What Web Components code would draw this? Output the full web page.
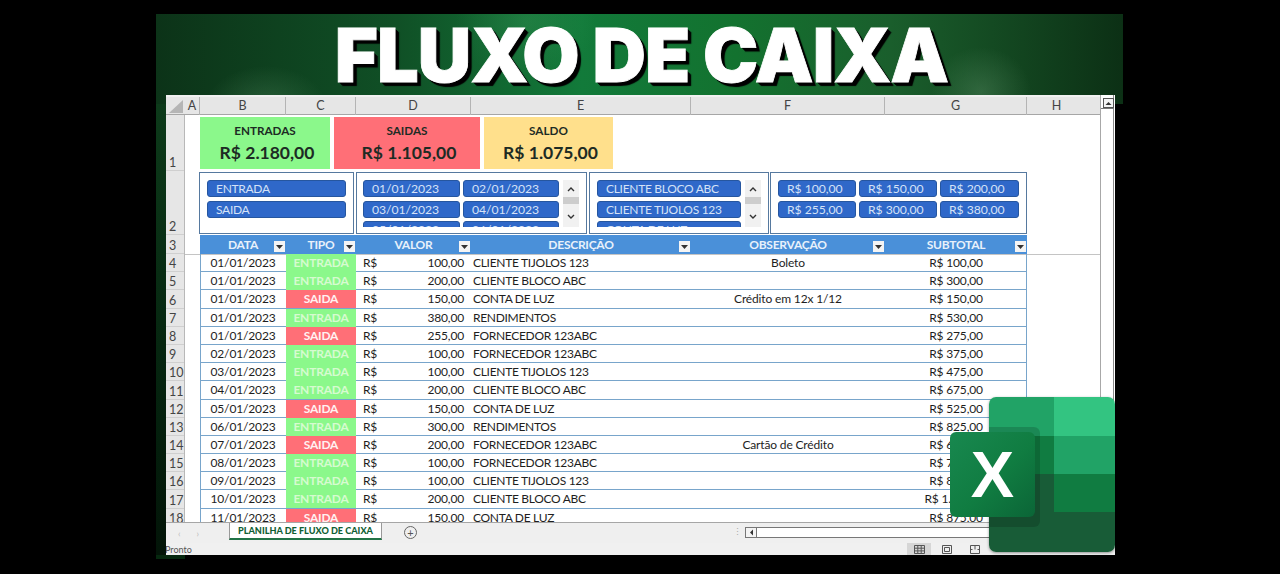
<!DOCTYPE html>
<html lang="pt-BR">
<head>
<meta charset="utf-8">
<title>Fluxo de Caixa</title>
<style>
  html, body { margin: 0; background: #000; height: 574px; overflow: hidden; }
  body { font-family: "Lato", "Liberation Sans", sans-serif; }
</style>
</head>
<body>
<fx-poster>
  <fx-sheet>
    <fx-row num="1" h="56" pad="2">
      <fx-cards>
        <fx-card w="130" color="#8bf88b" label="ENTRADAS" value="R$ 2.180,00"></fx-card>
        <fx-card w="146" color="#ff6f77" label="SAIDAS" value="R$ 1.105,00"></fx-card>
        <fx-card w="129" color="#ffe08c" label="SALDO" value="R$ 1.075,00"></fx-card>
      </fx-cards>
    </fx-row>
    <fx-row num="2" h="64" pad="1">
      <fx-slicers>
        <fx-slicer w="155" cols="1fr" pad="7">
          <fx-btn tight>ENTRADA</fx-btn><fx-btn tight>SAIDA</fx-btn>
        </fx-slicer>
        <fx-slicer w="231" cols="97px 96px" pad="6" scroll>
          <fx-btn>01/01/2023</fx-btn><fx-btn>02/01/2023</fx-btn>
          <fx-btn>03/01/2023</fx-btn><fx-btn>04/01/2023</fx-btn>
          <fx-btn>05/01/2023</fx-btn><fx-btn>06/01/2023</fx-btn>
        </fx-slicer>
        <fx-slicer w="180" cols="144px" pad="7" scroll>
          <fx-btn tight>CLIENTE BLOCO ABC</fx-btn><fx-btn tight>CLIENTE TIJOLOS 123</fx-btn><fx-btn tight>CONTA DE LUZ</fx-btn>
        </fx-slicer>
        <fx-slicer w="257" cols="78px 78px 79px" pad="7" style="margin-left:-1px">
          <fx-btn>R$ 100,00</fx-btn><fx-btn>R$ 150,00</fx-btn><fx-btn>R$ 200,00</fx-btn>
          <fx-btn>R$ 255,00</fx-btn><fx-btn>R$ 300,00</fx-btn><fx-btn>R$ 380,00</fx-btn>
        </fx-slicer>
      </fx-slicers>
    </fx-row>
    <fx-row num="3" h="19" freeze><fx-thead></fx-thead></fx-row>
    <fx-tbody></fx-tbody>
  </fx-sheet>
  <fx-excel-logo></fx-excel-logo>
</fx-poster>

<script>
const COLS = "86px 70px 115px 220px 194px 142px";

class FxPoster extends HTMLElement {
  constructor() {
    super();
    this.attachShadow({ mode: "open" }).innerHTML = `
      <style>
        :host {
          display: block; position: relative;
          width: 967px; height: 545px; margin: 14px 0 0 156px;
          background:
            radial-gradient(ellipse 60px 40px at 110px 92px, rgba(130,190,140,.22), transparent) 0 0 / 967px 90px no-repeat,
            radial-gradient(ellipse 50px 45px at 825px 78px, rgba(120,170,130,.28), transparent) 0 0 / 967px 90px no-repeat,
            radial-gradient(ellipse 70px 60px at 370px 8px, rgba(90,190,120,.2), transparent) 0 0 / 967px 90px no-repeat,
            linear-gradient(90deg, #0c3318 0, #105026 25%, #127a3a 44%, #13722f 60%, #1a5e2c 76%, #0c3015 100%) 0 0 / 967px 90px no-repeat,
            linear-gradient(#0d3a1a, #04200d 70%, #031408) 0 90px / 10px 451px no-repeat,
            linear-gradient(#06280f, #06280f) 0 541px / 29px 4px no-repeat;
        }
        .banner { height: 81px; display: flex; align-items: center; justify-content: center; padding-left: 4px; }
        h1 {
          margin: 0; color: #fff; white-space: nowrap;
          font: 900 74px/1 "Inter", "Liberation Sans", sans-serif;
          letter-spacing: -1px;
          -webkit-text-stroke: .8px #fff;
          text-shadow: 1px 1px 0 #000, 2px 2px 0 #000, 3px 3px 0 #000, 4px 4px 1px #000;
        }
      </style>
      <div class="banner"><h1>FLUXO DE CAIXA</h1></div>
      <slot></slot>`;
  }
}

class FxSheet extends HTMLElement {
  constructor() {
    super();
    const letters = [["A",15],["B",86],["C",70],["D",115],["E",220],["F",194],["G",142],["H",59]];
    const heads = letters.map(([l, w]) => `<span style="width:${w}px">${l}</span>`).join("");
    this.attachShadow({ mode: "open" }).innerHTML = `
      <style>
        :host { display: block; margin-left: 10px; width: 949px; height: 460px; background: #e9e9e9; font: 13px "Lato", "Liberation Sans", sans-serif; color: #222; overflow: hidden; }
        .top { display: flex; height: 427px; }
        .main { width: 934px; border-right: 1px solid #a8a8a8; box-sizing: content-box; background: #fff; overflow: hidden; }
        .cols { display: flex; height: 18px; padding-top: 2px; background: #e6e6e6; box-shadow: inset 0 -1px 0 #a6a6a6, inset 0 2px 0 #f1f1f1; }
        .cols span { box-sizing: border-box; text-align: center; font-size: 12.5px; line-height: 17px; color: #444; border-right: 1px solid #b4b4b4; }
        .cols span:last-child { border-right: 0; }
        .corner { width: 19px; display: flex; align-items: flex-end; justify-content: flex-end; padding: 0 2px 2px 0; box-sizing: border-box; }
        .vs { width: 14px; background: linear-gradient(90deg, #fff 12px, #8a8a8a 12px, #8a8a8a 13px, #fff 13px); }
        .vs i { display: flex; justify-content: center; align-items: center; width: 11px; height: 10px; margin: 3px 0 0 2px; background: #f4f4f4; border: 1px solid #555; box-sizing: border-box; }
        .vs b { display: block; height: 1px; background: #777; width: 13px; }
        .tabs { height: 21px; display: flex; align-items: flex-start; background: #efefef; border-top: 1px solid #a6a6a6; box-sizing: border-box; }
        .nav { width: 63px; display: flex; gap: 16px; padding: 5px 0 0 12px; box-sizing: border-box; color: #bbb; font-size: 9px; }
        .tab { width: 153px; height: 17px; box-sizing: border-box; background: #fff; border: 1px solid #999; border-top: 0; border-bottom: 2px solid #217346; color: #0f6034; font-weight: 900; font-size: 9.1px; line-height: 15px; text-align: center; }
        .plus { width: 11px; height: 11px; border: 1px solid #666; border-radius: 50%; margin: 3px 0 0 22px; display: flex; align-items: center; justify-content: center; color: #555; font-size: 11px; line-height: 10px; }
        .dots { margin: 4px 0 0 316px; color: #aaa; font-size: 9px; line-height: 10px; width: 6px; }
        .hs { margin: 4px 0 0 6px; width: 360px; height: 11px; border: 1px solid #777; box-sizing: border-box; background: #fff; display: flex; }
        .hs i { width: 10px; border-right: 1px solid #777; background: #f4f4f4; display: flex; align-items: center; justify-content: center; }
        .status { height: 12px; background: #f0f0f0; display: flex; align-items: center; font-size: 9px; color: #555; }
        .status .txt { width: 742px; margin-left: -1px; }
        .views { display: flex; align-items: center; height: 12px; }
        .views span { width: 28px; height: 12px; display: flex; align-items: center; justify-content: center; }
        .views span.on { background: #d6d6d6; width: 24px; }
      </style>
      <div class="top">
        <div class="main">
          <div class="cols">
            <div class="corner"><svg width="14" height="13"><path d="M14 0V13H0Z" fill="#b5b5b5"/></svg></div>
            ${heads}
          </div>
          <slot></slot>
        </div>
        <div class="vs">
          <i><svg width="7" height="5"><path d="M3.5 1L6.5 4H.5Z" fill="#333"/></svg></i><b></b>
        </div>
      </div>
      <div class="tabs">
        <div class="nav"><span>‹</span><span>›</span></div>
        <div class="tab">PLANILHA DE FLUXO DE CAIXA</div>
        <div class="plus">+</div>
        <div class="dots">⋮</div>
        <div class="hs"><i><svg width="5" height="7"><path d="M4 .5V6.5L1 3.5Z" fill="#333"/></svg></i></div>
      </div>
      <div class="status">
        <div class="txt">Pronto</div>
        <div class="views">
          <span class="on"><svg width="11" height="9" fill="none" stroke="#555"><path d="M.5.5h10v8H.5zM.5 3.2h10M.5 5.9h10M3.8.5v8M7.2.5v8"/></svg></span>
          <span style="margin-left:2px"><svg width="10" height="9" fill="none" stroke="#555"><path d="M.5.5h9v8h-9zM2.5 2.5h5v4h-5z"/></svg></span>
          <span><svg width="10" height="9" fill="none" stroke="#555"><path d="M.5.5h9v8h-9zM5 .5v4M.5 4.5h2M7.5 4.5h2"/></svg></span>
        </div>
      </div>`;
  }
}

class FxRow extends HTMLElement {
  constructor() {
    super();
    this.attachShadow({ mode: "open" });
  }
  connectedCallback() {
    const h = this.getAttribute("h") || "18.2";
    const pad = this.getAttribute("pad") || "0";
    const line = this.hasAttribute("freeze") ? "box-shadow: 0 1px 0 #c4c4c4;" : "";
    this.shadowRoot.innerHTML = `
      <style>
        :host { display: flex; height: ${h}px; position: relative; ${line} }
        .num { width: 19px; flex: none; box-sizing: border-box; background: #e6e6e6; border-right: 1px solid #b8b8b8; box-shadow: inset 0 -1px 0 #cfcfcf; display: flex; align-items: flex-end; padding: 0 0 0 3px; font-size: 12.5px; line-height: 16px; color: #444; }
        .gut { width: 15px; flex: none; }
        .body { flex: 1; min-width: 0; box-sizing: border-box; padding-top: ${pad}px; }
      </style>
      <div class="num">${this.getAttribute("num")}</div><div class="gut"></div>
      <div class="body"><slot></slot></div>`;
  }
}

class FxCards extends HTMLElement {
  constructor() {
    super();
    this.attachShadow({ mode: "open" }).innerHTML = `
      <style>:host { display: flex; gap: 4px; }</style><slot></slot>`;
  }
}

class FxCard extends HTMLElement {
  constructor() {
    super();
    this.attachShadow({ mode: "open" });
  }
  connectedCallback() {
    this.shadowRoot.innerHTML = `
      <style>
        :host { display: flex; flex-direction: column; align-items: center; box-sizing: border-box; height: 52px; width: ${this.getAttribute("w")}px; background: ${this.getAttribute("color")}; padding-top: 6px; color: #1d2b24; font-weight: 700; }
        .l { font-size: 11.7px; line-height: 15px; }
        .v { font-size: 17.5px; line-height: 22px; margin: 4px 0 0 4px; }
      </style>
      <div class="l">${this.getAttribute("label")}</div>
      <div class="v">${this.getAttribute("value")}</div>`;
  }
}

class FxSlicers extends HTMLElement {
  constructor() {
    super();
    this.attachShadow({ mode: "open" }).innerHTML = `
      <style>:host { display: flex; gap: 2px; margin-left: -1px; height: 62px; }</style><slot></slot>`;
  }
}

class FxSlicer extends HTMLElement {
  constructor() {
    super();
    this.attachShadow({ mode: "open" });
  }
  connectedCallback() {
    const scroll = this.hasAttribute("scroll") ? `
      <div class="sb">
        <svg width="10" height="8" fill="none" stroke="#333" stroke-width="1.4"><path d="M2 6l3-3 3 3"/></svg>
        <i></i>
        <svg width="10" height="8" fill="none" stroke="#333" stroke-width="1.4" style="margin-top:9px"><path d="M2 2l3 3 3-3"/></svg>
      </div>` : "";
    this.shadowRoot.innerHTML = `
      <style>
        :host { display: flex; box-sizing: border-box; width: ${this.getAttribute("w")}px; height: 62px; border: 1px solid #56799f; background: #fff; padding: 7px 7px 0 ${this.getAttribute("pad")}px; gap: 4px; overflow: hidden; }
        .list { height: 47px; overflow: hidden; flex: 1; display: grid; grid-template-columns: ${this.getAttribute("cols")}; grid-auto-rows: 17px; gap: 3.5px 3px; align-content: start; }
        .sb { flex: none; width: 16px; height: 47px; background: #f1f1f1; display: flex; flex-direction: column; align-items: center; padding-top: 5px; box-sizing: border-box; }
        .sb i { display: block; width: 16px; height: 7px; background: #cdcdcd; margin-top: 4px; }
      </style>
      <div class="list"><slot></slot></div>${scroll}`;
  }
}

class FxBtn extends HTMLElement {
  constructor() {
    super();
    this.attachShadow({ mode: "open" }).innerHTML = `
      <style>
        :host { display: flex; align-items: center; box-sizing: border-box; height: 17px; padding: 0 0 0 8px; background: #2f68c9; border: 1px solid #26569f; border-radius: 3px; color: #d5e2f7; font-size: 12.2px; letter-spacing: -.05px; white-space: nowrap; overflow: hidden; }
        :host([tight]) { font-size: 12px; letter-spacing: -.3px; }
      </style><slot></slot>`;
  }
}

class FxThead extends HTMLElement {
  constructor() {
    super();
    const names = ["DATA", "TIPO", "VALOR", "DESCRIÇÃO", "OBSERVAÇÃO", "SUBTOTAL"];
    const cells = names.map((n) => `
      <div class="c">${n}<span class="dd"><svg width="7" height="4"><path d="M0 0H7L3.5 4Z" fill="#333"/></svg></span></div>`).join("");
    this.attachShadow({ mode: "open" }).innerHTML = `
      <style>
        :host { display: grid; grid-template-columns: ${COLS}; width: 827px; height: 19px; background: #4a90d9; color: #e8f1fb; font-weight: 700; font-size: 12px; letter-spacing: -.25px; }
        .c { position: relative; text-align: center; line-height: 20px; }
        .dd { position: absolute; right: 1px; top: 6px; width: 11px; height: 11px; background: #f4f4f4; display: flex; align-items: center; justify-content: center; }
      </style>${cells}`;
  }
}

class FxTbody extends HTMLElement {
  constructor() {
    super();
    const data = [
      ["01/01/2023","E","100,00","CLIENTE TIJOLOS 123","Boleto","R$ 100,00"],
      ["01/01/2023","E","200,00","CLIENTE BLOCO ABC","","R$ 300,00"],
      ["01/01/2023","S","150,00","CONTA DE LUZ","Crédito em 12x 1/12","R$ 150,00"],
      ["01/01/2023","E","380,00","RENDIMENTOS","","R$ 530,00"],
      ["01/01/2023","S","255,00","FORNECEDOR 123ABC","","R$ 275,00"],
      ["02/01/2023","E","100,00","FORNECEDOR 123ABC","","R$ 375,00"],
      ["03/01/2023","E","100,00","CLIENTE TIJOLOS 123","","R$ 475,00"],
      ["04/01/2023","E","200,00","CLIENTE BLOCO ABC","","R$ 675,00"],
      ["05/01/2023","S","150,00","CONTA DE LUZ","","R$ 525,00"],
      ["06/01/2023","E","300,00","RENDIMENTOS","","R$ 825,00"],
      ["07/01/2023","S","200,00","FORNECEDOR 123ABC","Cartão de Crédito","R$ 625,00"],
      ["08/01/2023","E","100,00","FORNECEDOR 123ABC","","R$ 725,00"],
      ["09/01/2023","E","100,00","CLIENTE TIJOLOS 123","","R$ 825,00"],
      ["10/01/2023","E","200,00","CLIENTE BLOCO ABC","","R$ 1.025,00"],
      ["11/01/2023","S","150,00","CONTA DE LUZ","","R$ 875,00"],
    ];
    this.attachShadow({ mode: "open" }).innerHTML = `
      <style>
        :host { display: block; }
        .r { display: grid; grid-template-columns: ${COLS}; width: 827px; height: 18.2px; box-sizing: border-box; border-bottom: 1px solid #78a5cb; box-shadow: inset 1px 0 0 #78a5cb, inset -1px 0 0 #78a5cb; line-height: 18px; font-size: 12px; letter-spacing: -.15px; color: #1e1e1e; white-space: nowrap; }
        .ctr { text-align: center; }
        .t { text-align: center; font-weight: 700; letter-spacing: -.2px; }
        .E { background: #8bf88b; color: #d6fbd0; }
        .S { background: #ff6f77; color: #fff2f2; }
        .val { display: flex; justify-content: space-between; padding: 0 7px; }
        .desc { padding-left: 2px; letter-spacing: -.3px; }
      </style>
      ${data.map((d, i) => `
        <fx-row num="${i + 4}" h="18.2">
          <div class="r">
            <div class="ctr">${d[0]}</div>
            <div class="t ${d[1]}">${d[1] === "E" ? "ENTRADA" : "SAIDA"}</div>
            <div class="val"><span>R$</span><span>${d[2]}</span></div>
            <div class="desc">${d[3]}</div>
            <div class="ctr">${d[4]}</div>
            <div class="ctr">${d[5]}</div>
          </div>
        </fx-row>`).join("")}`;
  }
}

class FxExcelLogo extends HTMLElement {
  constructor() {
    super();
    this.attachShadow({ mode: "open" }).innerHTML = `
      <style>
        :host { position: absolute; left: 794px; top: 383px; width: 165px; height: 155px; }
        .panel { position: absolute; left: 39px; top: 0; width: 126px; height: 155px; border-radius: 7px; overflow: hidden; display: grid; grid-template-columns: 65px 61px; grid-template-rows: 39px 38px 38px 40px; box-shadow: 0 1px 3px rgba(0,0,0,.4); }
        .panel i:nth-child(1) { background: #21a366; }
        .panel i:nth-child(2) { background: #33c481; }
        .panel i:nth-child(3) { background: #107c41; }
        .panel i:nth-child(4) { background: #21a366; }
        .panel i:nth-child(5) { background: #185c37; }
        .panel i:nth-child(6) { background: #107c41; }
        .panel i:nth-child(7) { background: #185c37; grid-column: 1 / 3; }
        .shade { position: absolute; left: 0; top: 30px; width: 51px; height: 100px; background: rgba(0,0,0,.16); border-radius: 0 6px 6px 0; }
        .front { position: absolute; left: 0; top: 35px; width: 85px; height: 85px; border-radius: 6px; background: linear-gradient(135deg, #18884f, #107c41 55%, #0b6537); display: flex; align-items: center; justify-content: center; color: #fff; font: 700 65px/1 "Liberation Sans", sans-serif; }
      </style>
      <div class="panel"><i></i><i></i><i></i><i></i><i></i><i></i><i></i><div class="shade"></div></div>
      <div class="front">X</div>`;
  }
}

customElements.define("fx-poster", FxPoster);
customElements.define("fx-sheet", FxSheet);
customElements.define("fx-row", FxRow);
customElements.define("fx-cards", FxCards);
customElements.define("fx-card", FxCard);
customElements.define("fx-slicers", FxSlicers);
customElements.define("fx-slicer", FxSlicer);
customElements.define("fx-btn", FxBtn);
customElements.define("fx-thead", FxThead);
customElements.define("fx-tbody", FxTbody);
customElements.define("fx-excel-logo", FxExcelLogo);
</script>
</body>
</html>
